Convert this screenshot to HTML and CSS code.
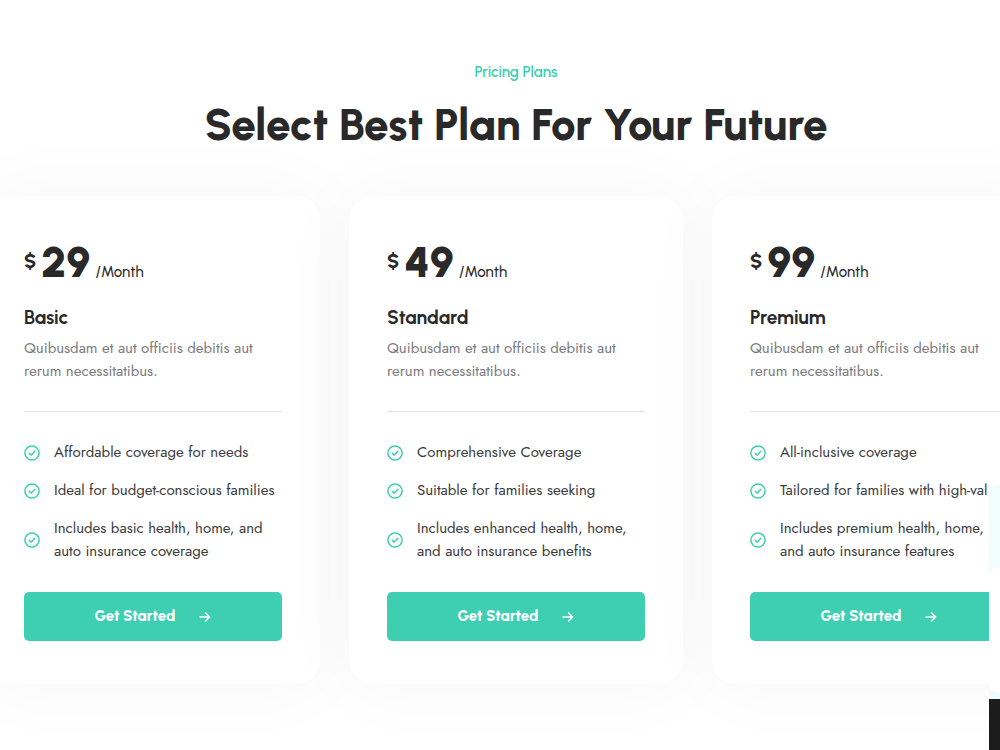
FILE: index.html
```html
<!DOCTYPE html>
<html lang="en">
<head>
<meta charset="utf-8">
<title>Pricing Plans</title>
<link rel="stylesheet" href="styles.css">
</head>
<body>
<svg class="sprite" aria-hidden="true">
  <symbol id="check" viewBox="0 0 16 16"><circle cx="8" cy="8" r="7.1"/><path d="M5.2 8.2l2 1.9 3.7-3.9"/></symbol>
  <symbol id="arrow" viewBox="0 0 12 12"><path d="M1 6h9.6M6.6 2l4 4-4 4"/></symbol>
</svg>
<main class="pricing">
  <header class="intro">
    <p class="eyebrow">Pricing Plans</p>
    <h1 class="title">Select Best Plan For Your Future</h1>
  </header>
  <div class="plans">
    <article class="card">
      <p class="price"><span class="currency">$</span><span class="amount">29</span><span class="period">/Month</span></p>
      <h2 class="name">Basic</h2>
      <p class="summary">Quibusdam et aut officiis debitis aut<br>rerum necessitatibus.</p>
      <ul class="features">
        <li><svg class="check"><use href="#check"/></svg><span>Affordable coverage for needs</span></li>
        <li><svg class="check"><use href="#check"/></svg><span>Ideal for budget-conscious families</span></li>
        <li><svg class="check"><use href="#check"/></svg><span>Includes basic health, home, and<br>auto insurance coverage</span></li>
      </ul>
      <a class="start" href="#">Get Started<svg class="arrow" aria-hidden="true"><use href="#arrow"/></svg></a>
    </article>
    <article class="card">
      <p class="price"><span class="currency">$</span><span class="amount">49</span><span class="period">/Month</span></p>
      <h2 class="name">Standard</h2>
      <p class="summary">Quibusdam et aut officiis debitis aut<br>rerum necessitatibus.</p>
      <ul class="features">
        <li><svg class="check"><use href="#check"/></svg><span>Comprehensive Coverage</span></li>
        <li><svg class="check"><use href="#check"/></svg><span>Suitable for families seeking</span></li>
        <li><svg class="check"><use href="#check"/></svg><span>Includes enhanced health, home,<br>and auto insurance benefits</span></li>
      </ul>
      <a class="start" href="#">Get Started<svg class="arrow" aria-hidden="true"><use href="#arrow"/></svg></a>
    </article>
    <article class="card">
      <p class="price"><span class="currency">$</span><span class="amount">99</span><span class="period">/Month</span></p>
      <h2 class="name">Premium</h2>
      <p class="summary">Quibusdam et aut officiis debitis aut<br>rerum necessitatibus.</p>
      <ul class="features">
        <li><svg class="check"><use href="#check"/></svg><span>All-inclusive coverage</span></li>
        <li><svg class="check"><use href="#check"/></svg><span>Tailored for families with high-val</span></li>
        <li><svg class="check"><use href="#check"/></svg><span>Includes premium health, home,<br>and auto insurance features</span></li>
      </ul>
      <a class="start" href="#">Get Started<svg class="arrow" aria-hidden="true"><use href="#arrow"/></svg></a>
    </article>
  </div>
  <aside class="drawer" aria-hidden="true"><div class="drawer-panel"></div><div class="drawer-footer"></div></aside>
</main>
</body>
</html>
```
FILE: styles.css
```css
* { box-sizing: border-box; margin: 0; padding: 0; }
body {
  font-family: "Jost", "Lato", sans-serif;
  font-size: 15px;
  line-height: 23px;
  color: #3b3b3d;
  background: #fff;
}
.sprite { display: none; }
.pricing {
  position: relative;
  min-height: 100vh;
  overflow: hidden;
  padding-top: 61px;
}
.intro, .plans { margin-left: -14px; margin-right: -46px; }
.intro { text-align: center; font-family: "Urbanist", "Lato", sans-serif; }
.eyebrow { color: #3ecfb2; font-weight: 600; }
.title {
  margin-top: 14px;
  font-size: 44px;
  line-height: 54px;
  font-weight: 800;
  color: #29292a;
}
.plans {
  display: grid;
  grid-template-columns: repeat(3, 1fr);
  gap: 29px;
  margin-top: 44px;
}
.card {
  padding: 38px 38px 43px;
  border-radius: 24px;
  background: #fff;
  box-shadow: 0 0 80px rgba(0, 0, 0, 0.04);
  white-space: nowrap;
}
.price {
  display: flex;
  align-items: baseline;
  font-family: "Urbanist", "Lato", sans-serif;
  color: #29292a;
  line-height: 56px;
}
.currency { align-self: flex-start; font-size: 20px; font-weight: 800; line-height: 54px; }
.amount { margin-left: 5px; font-size: 43px; font-weight: 900; }
.period { margin-left: 5px; font-weight: 500; }
.name {
  margin-top: 5px;
  font-family: "Urbanist", "Lato", sans-serif;
  font-size: 19px;
  line-height: 26px;
  font-weight: 700;
  color: #29292a;
}
.summary {
  margin-top: 6px;
  padding-bottom: 28px;
  border-bottom: 1px solid #e2e3e3;
  color: #7b7b7d;
}
.features {
  display: grid;
  gap: 15px;
  margin: 29px 0;
  list-style: none;
}
.features li { display: flex; align-items: center; gap: 14px; }
.check, .arrow { flex: none; fill: none; stroke-linecap: round; stroke-linejoin: round; }
.check { width: 16px; height: 16px; stroke: #3ecfb2; stroke-width: 1.5; }
.start {
  display: flex;
  align-items: center;
  justify-content: center;
  gap: 24px;
  padding: 13px 0;
  border-radius: 5px;
  background: #3ecfb2;
  color: #fff;
  font-family: "Urbanist", "Lato", sans-serif;
  font-weight: 800;
  text-decoration: none;
}
.arrow { width: 12px; height: 12px; stroke: #fff; stroke-width: 1.6; }
.drawer {
  position: absolute;
  top: 485px;
  right: 0;
  bottom: 0;
  width: 11px;
  display: flex;
  flex-direction: column;
  padding-top: 83px;
  border-radius: 8px 0 0 0;
  background: #f1fdfb;
}
.drawer-panel { height: 124px; border-radius: 8px 0 0 8px; background: #fff; }
.drawer-footer { flex: 1; margin-top: 7px; background: #1c1c1c; }
```
